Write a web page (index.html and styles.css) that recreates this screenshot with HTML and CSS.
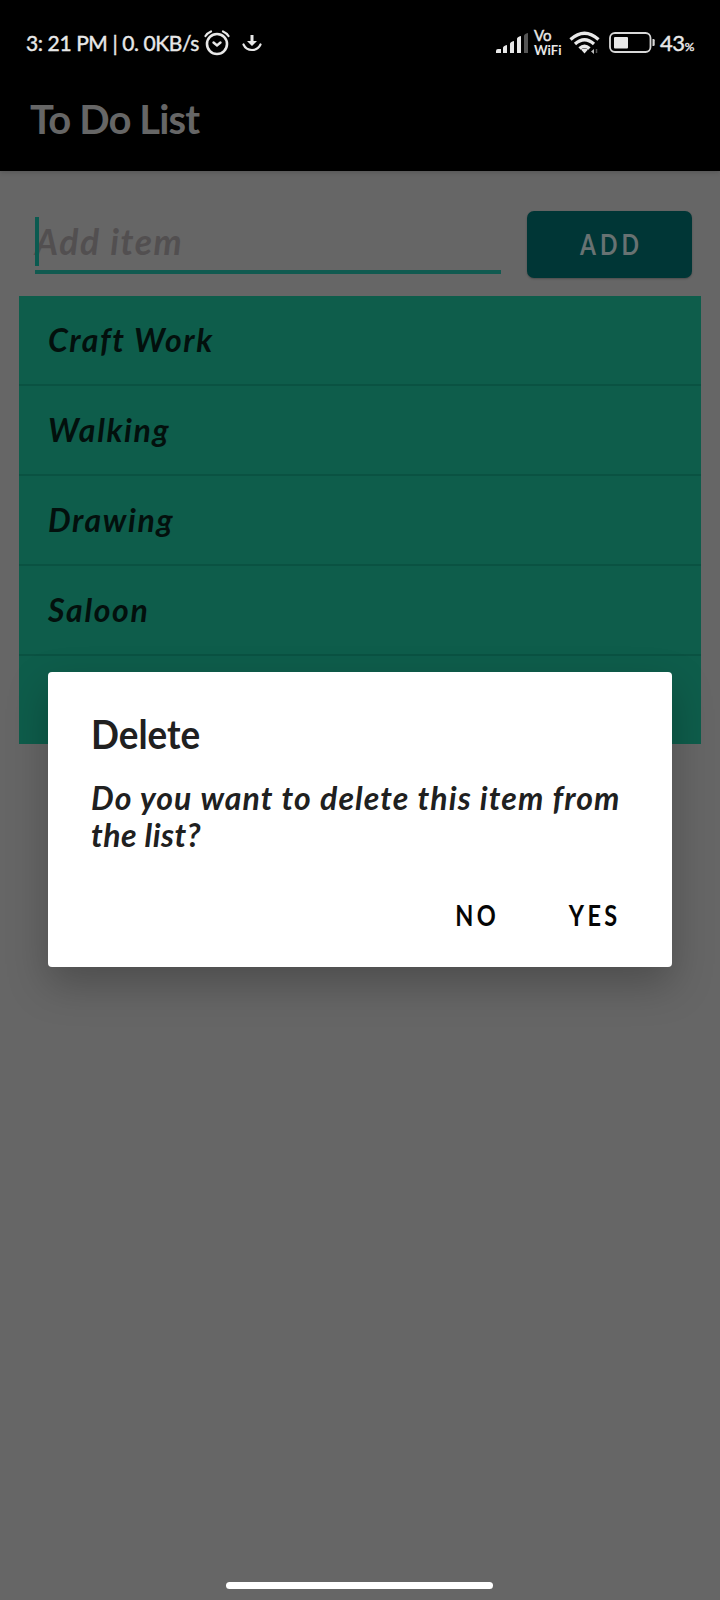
FILE: index.html
```html
<!DOCTYPE html>
<html lang="en">
<head>
<meta charset="utf-8">
<title>To Do List</title>
<link rel="stylesheet" href="styles.css">
</head>
<body>
<div class="screen">
  <header class="top">
    <div class="status">
      <span class="clock">3: 21 PM | 0. 0KB/s</span>
      <svg class="alarm" width="28" height="26" viewBox="0 0 28 26" fill="none" stroke="#e8e8e8" stroke-linecap="round"><circle cx="13" cy="14" r="10" stroke-width="2.6"/><path d="M1.500 6Q3.500 3 7 1.500M19 1.500Q22.500 3 24.500 6" stroke-width="2.2"/><path d="M9.500 12.500L13 15.500L16.500 12.500" stroke-width="2.4"/></svg>
      <svg class="download" width="20" height="18" viewBox="0 0 20 18"><path d="M8.500 1h3v6h3.500L10 12L5 7h3.500z" fill="#e8e8e8"/><path d="M1.500 10.500Q4 16 10 16T18.500 10.500" fill="none" stroke="#e8e8e8" stroke-width="2.2" stroke-linecap="round"/></svg>
      <svg class="signal" width="32" height="21" viewBox="0 0 32 21" fill="#e8e8e8"><path d="M0 20v-2q0-2 2-2h3v4zM7 20v-5q0-2 4-3v8zM14 20v-9q0-2 4-3v12zM21 20V6q0-2 4-3v17z"/><path d="M28 20V3q0-2 4-3v20z" fill="#555"/></svg>
      <span class="vowifi"><span class="vo">Vo</span><span class="wf">WiFi</span></span>
      <svg class="wifi" width="31" height="24" viewBox="0 0 31 24" fill="none" stroke="#e8e8e8" stroke-width="3.300"><path d="M1.500 8.500Q15.500-4 29.500 8.500M6 13Q15.500 4.500 25 13M10.500 17.500Q15.500 13 20.500 17.500"/><path d="M15.500 22.500l-3.500-4q3.500-2 7 0z" fill="#e8e8e8" stroke="none"/><path d="M25 18v5l-3-2.500z" stroke="none" fill="#bbb"/><path d="M27.500 18v4" stroke="#555" stroke-width="1.500"/></svg>
      <svg class="battery" width="46" height="21" viewBox="0 0 46 21"><rect x="1" y="1" width="40.500" height="19" rx="5" fill="none" stroke="#d8d8d8" stroke-width="1.800"/><rect x="5" y="5" width="14" height="11.500" rx="1" fill="#e8e8e8"/><path d="M43.500 7h1q1.200 0 1.200 1.200v4.600q0 1.200-1.200 1.200h-1z" fill="#d8d8d8"/></svg>
      <span class="level">43<small>%</small></span>
    </div>
    <h1 class="title">To Do List</h1>
  </header>
  <main class="content">
    <div class="entry">
      <div class="field"><span class="cursor"></span><span class="hint">Add item</span></div>
      <button class="add"><span>ADD</span></button>
    </div>
    <ul class="list">
      <li>Craft Work</li>
      <li>Walking</li>
      <li>Drawing</li>
      <li>Saloon</li>
      <li></li>
    </ul>
  </main>
  <section class="dialog">
    <h2>Delete</h2>
    <p>Do you want to delete this item from<br><span class="last">the list?</span></p>
    <div class="actions"><button class="no">NO</button><button class="yes">YES</button></div>
  </section>
  <div class="home"></div>
</div>
</body>
</html>
```
FILE: styles.css
```css
* { box-sizing: border-box; margin: 0; padding: 0; }
body { font-family: Lato, sans-serif; font-weight: 700; }
button { border: 0; background: none; font: inherit; color: inherit; letter-spacing: inherit; }
.screen { position: relative; width: 720px; height: 1600px; background: #666; overflow: hidden; white-space: nowrap; }
.top { height: 171px; background: #000; box-shadow: 0 1px 5px rgba(0,0,0,.18); }
.status { height: 86px; display: flex; align-items: center; padding-left: 26px; color: #e8e8e8; }
.clock { width: 178px; margin-top: -2px; font-size: 21px; font-weight: 400; letter-spacing: -.4px; -webkit-text-stroke: .4px; }
.alarm { margin-top: -1px; }
.download { margin-left: 10px; }
.signal { margin-left: 234px; }
.vowifi { display: flex; flex-direction: column; margin-left: 6px; width: 35px; }
.vo { height: 15px; font-size: 15px; line-height: 13px; font-weight: 400; -webkit-text-stroke: .4px; }
.wf { height: 13px; font-size: 13px; line-height: 13px; }
.wifi { flex: none; }
.battery { margin: -1px 0 0 9px; flex: none; }
.level { margin: -2px 0 0 5px; font-size: 22px; font-weight: 400; letter-spacing: -.4px; -webkit-text-stroke: .4px; }
.level small { font-size: 12px; }
.title { margin-left: 30px; font-size: 40px; line-height: 67px; color: #666; letter-spacing: -.9px; }
.content { padding: 40px 19px 0; }
.entry { display: flex; height: 85px; padding-left: 16px; }
.field { position: relative; width: 466px; height: 63px; border-bottom: 4px solid #115a50; padding-top: 9px; }
.cursor { position: absolute; left: 0; top: 6px; width: 4px; height: 49px; background: #0b5a50; }
.hint { font-size: 35.5px; line-height: 44px; font-style: italic; letter-spacing: 1.6px; color: #524f50; }
.add { margin-left: 26px; width: 165px; height: 67px; border-radius: 7px; background: #003636; color: #687272; font-size: 28px; box-shadow: 0 1px 2px rgba(0,0,0,.25); }
.add span { display: inline-block; letter-spacing: 5px; transform: translate(2px, -1px) scaleX(.82); }
.list { list-style: none; height: 448px; background: #0e5d4b; color: #03100d; font-style: italic; }
.list li { height: 90px; border-bottom: 2px solid #0a5242; padding-left: 29px; font-size: 32px; line-height: 88px; letter-spacing: 1.65px; }
.list li:last-child { border: 0; height: 88px; }
.dialog { position: absolute; left: 48px; top: 672px; width: 624px; height: 295px; border-radius: 4px; background: #fff; color: #202020; padding: 38px 43px 0; box-shadow: 0 17px 40px rgba(0,0,0,.25); }
.dialog h2 { font-size: 40px; line-height: 48px; transform: scaleX(.92); transform-origin: left; }
.dialog p { margin-top: 22px; font-size: 32px; line-height: 36.5px; font-style: italic; letter-spacing: 1.1px; }
.last { letter-spacing: .5px; }
.actions { display: flex; justify-content: flex-end; margin-top: 44px; padding-right: 8px; color: #050505; font-size: 28px; line-height: 36px; letter-spacing: 4px; }
.actions button { transform: scaleX(.84); transform-origin: right; }
.actions .no { margin-right: 60px; }
.home { position: absolute; left: 226px; top: 1582px; width: 267px; height: 7px; border-radius: 4px; background: #fff; }
```
